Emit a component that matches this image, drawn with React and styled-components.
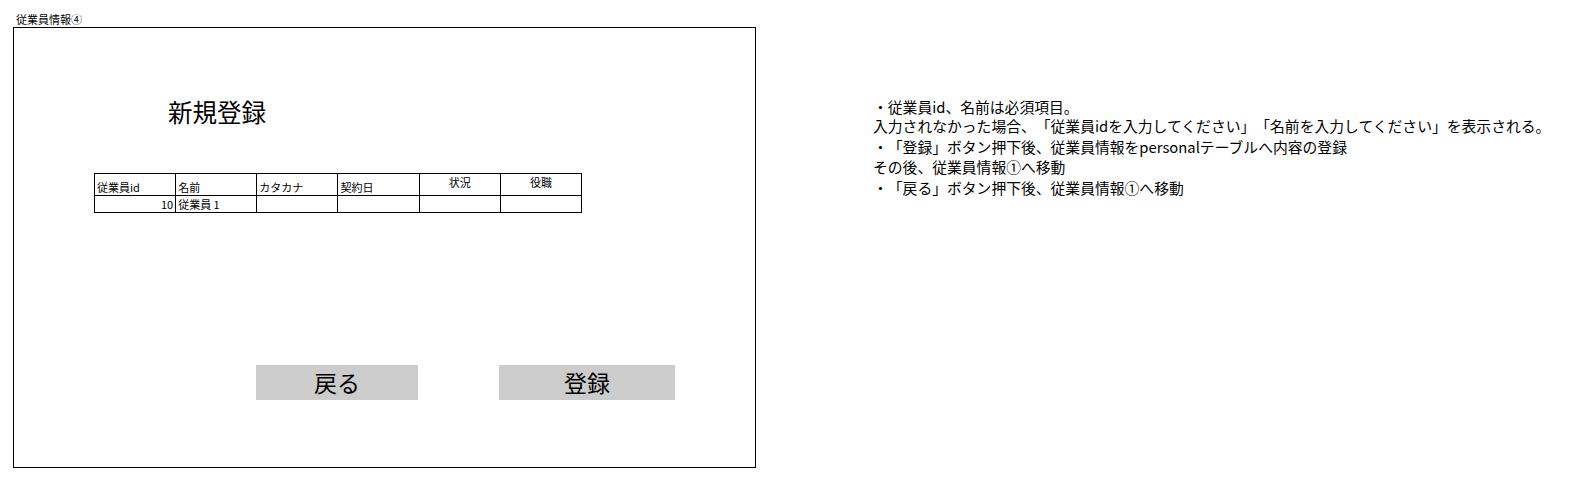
import React from "react";
import styled, { createGlobalStyle } from "styled-components";

const Global = createGlobalStyle`
  html, body { margin: 0; padding: 0; background: #fff; }
  body {
    font-family: "Noto Sans CJK JP", "Noto Sans", sans-serif;
    color: #000;
    text-spacing-trim: space-all;
  }
`;

const Page = styled.div`
  display: flex;
  align-items: flex-start;
  width: 1596px;
  height: 488px;
  padding-left: 13px;
  box-sizing: border-box;
`;

const LeftBlock = styled.div`
  display: flex;
  flex-direction: column;
`;

const SheetTitle = styled.div`
  margin-top: 12px;
  padding-left: 3px;
  font-size: 11px;
  line-height: 15px;
  height: 15px;
`;

const Frame = styled.div`
  width: 743px;
  height: 441px;
  box-sizing: border-box;
  border: 1px solid #000;
  display: flex;
  flex-direction: column;
`;

const Heading = styled.h1`
  margin: 72px 0 0 154px;
  font-size: 24.5px;
  font-weight: 400;
  line-height: 24px;
`;

const Table = styled.table`
  margin: 49px 0 0 80px;
  border-collapse: collapse;
  table-layout: fixed;
  width: 488px;
  font-size: 11px;
`;

const HeadCell = styled.td`
  width: 81px;
  height: 22px;
  padding: 0 2px 1px;
  border: 1px solid #000;
  box-sizing: border-box;
  vertical-align: ${(p) => (p.$center ? "middle" : "bottom")};
  text-align: ${(p) => (p.$center ? "center" : "left")};
  line-height: 13px;
  ${(p) => (p.$center ? "padding-bottom: 4px;" : "")}
`;

const Cell = styled.td`
  height: 17px;
  padding: 0 2px;
  border: 1px solid #000;
  box-sizing: border-box;
  text-align: ${(p) => (p.$right ? "right" : "left")};
  line-height: 13px;
  vertical-align: middle;
`;

const ButtonRow = styled.div`
  display: flex;
  margin: 152px 0 0 242px;
  gap: 81px;
`;

const Button = styled.button`
  width: ${(p) => p.$w}px;
  height: 35px;
  border: none;
  background: #cccccc;
  font-family: inherit;
  font-size: 23px;
  line-height: 35px;
  padding: 0;
  color: #000;
`;

const Notes = styled.div`
  margin: 98px 0 0 117px;
  font-size: 14.8px;
  line-height: 17px;
`;

const NoteLine = styled.div`
  white-space: nowrap;
  margin-top: ${(p) => p.$gap || 0}px;
`;

const headers = [
  { t: "従業員id" },
  { t: "名前" },
  { t: "カタカナ" },
  { t: "契約日" },
  { t: "状況", c: true },
  { t: "役職", c: true },
];

export default function App() {
  return (
    <>
      <Global />
      <Page>
        <LeftBlock>
          <SheetTitle>従業員情報④</SheetTitle>
          <Frame>
            <Heading>新規登録</Heading>
            <Table>
              <tbody>
                <tr>
                  {headers.map((h) => (
                    <HeadCell key={h.t} $center={h.c}>
                      {h.t}
                    </HeadCell>
                  ))}
                </tr>
                <tr>
                  <Cell $right>10</Cell>
                  <Cell>従業員 1</Cell>
                  <Cell />
                  <Cell />
                  <Cell />
                  <Cell />
                </tr>
              </tbody>
            </Table>
            <ButtonRow>
              <Button $w={162}>戻る</Button>
              <Button $w={176}>登録</Button>
            </ButtonRow>
          </Frame>
        </LeftBlock>
        <Notes>
          <NoteLine>・従業員id、名前は必須項目。</NoteLine>
          <NoteLine $gap={2}>入力されなかった場合、「従業員idを入力してください」「名前を入力してください」を表示される。</NoteLine>
          <NoteLine $gap={4}>・「登録」ボタン押下後、従業員情報をpersonalテーブルへ内容の登録</NoteLine>
          <NoteLine $gap={3}>その後、従業員情報①へ移動</NoteLine>
          <NoteLine $gap={4}>・「戻る」ボタン押下後、従業員情報①へ移動</NoteLine>
        </Notes>
      </Page>
    </>
  );
}
